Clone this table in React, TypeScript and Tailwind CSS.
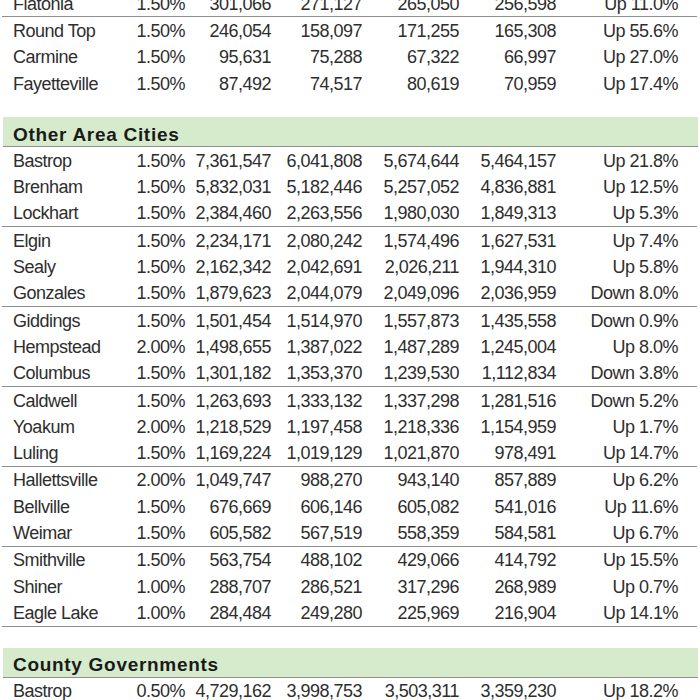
import React from "react";

type Row = [string, string, string, string, string, string, string];

const top: Row[] = [
  ["Flatonia", "1.50%", "301,066", "271,127", "265,050", "256,598", "Up 11.0%"],
  ["Round Top", "1.50%", "246,054", "158,097", "171,255", "165,308", "Up 55.6%"],
  ["Carmine", "1.50%", "95,631", "75,288", "67,322", "66,997", "Up 27.0%"],
  ["Fayetteville", "1.50%", "87,492", "74,517", "80,619", "70,959", "Up 17.4%"],
];

const other: Row[] = [
  ["Bastrop", "1.50%", "7,361,547", "6,041,808", "5,674,644", "5,464,157", "Up 21.8%"],
  ["Brenham", "1.50%", "5,832,031", "5,182,446", "5,257,052", "4,836,881", "Up 12.5%"],
  ["Lockhart", "1.50%", "2,384,460", "2,263,556", "1,980,030", "1,849,313", "Up 5.3%"],
  ["Elgin", "1.50%", "2,234,171", "2,080,242", "1,574,496", "1,627,531", "Up 7.4%"],
  ["Sealy", "1.50%", "2,162,342", "2,042,691", "2,026,211", "1,944,310", "Up 5.8%"],
  ["Gonzales", "1.50%", "1,879,623", "2,044,079", "2,049,096", "2,036,959", "Down 8.0%"],
  ["Giddings", "1.50%", "1,501,454", "1,514,970", "1,557,873", "1,435,558", "Down 0.9%"],
  ["Hempstead", "2.00%", "1,498,655", "1,387,022", "1,487,289", "1,245,004", "Up 8.0%"],
  ["Columbus", "1.50%", "1,301,182", "1,353,370", "1,239,530", "1,112,834", "Down 3.8%"],
  ["Caldwell", "1.50%", "1,263,693", "1,333,132", "1,337,298", "1,281,516", "Down 5.2%"],
  ["Yoakum", "2.00%", "1,218,529", "1,197,458", "1,218,336", "1,154,959", "Up 1.7%"],
  ["Luling", "1.50%", "1,169,224", "1,019,129", "1,021,870", "978,491", "Up 14.7%"],
  ["Hallettsville", "2.00%", "1,049,747", "988,270", "943,140", "857,889", "Up 6.2%"],
  ["Bellville", "1.50%", "676,669", "606,146", "605,082", "541,016", "Up 11.6%"],
  ["Weimar", "1.50%", "605,582", "567,519", "558,359", "584,581", "Up 6.7%"],
  ["Smithville", "1.50%", "563,754", "488,102", "429,066", "414,792", "Up 15.5%"],
  ["Shiner", "1.00%", "288,707", "286,521", "317,296", "268,989", "Up 0.7%"],
  ["Eagle Lake", "1.00%", "284,484", "249,280", "225,969", "216,904", "Up 14.1%"],
];

const county: Row[] = [
  ["Bastrop", "0.50%", "4,729,162", "3,998,753", "3,503,311", "3,359,230", "Up 18.2%"],
];

function DataRow({ r }: { r: Row }) {
  return (
    <div className="grid grid-cols-[128px_55px_86px_91px_97px_97px_122px] h-[26.3px] items-center leading-none pt-[1px]">
      <div className="pl-[11px] whitespace-nowrap">{r[0]}</div>
      <div className="text-right">{r[1]}</div>
      <div className="text-right">{r[2]}</div>
      <div className="text-right">{r[3]}</div>
      <div className="text-right">{r[4]}</div>
      <div className="text-right">{r[5]}</div>
      <div className="text-right whitespace-nowrap">{r[6]}</div>
    </div>
  );
}

function Group({ rows, line = true }: { rows: Row[]; line?: boolean }) {
  return (
    <div className={line ? "border-b border-[#8f8f8f]" : ""}>
      {rows.map((r) => (
        <DataRow key={r[0] + r[2]} r={r} />
      ))}
    </div>
  );
}

function Header({ title }: { title: string }) {
  return (
    <div className="ml-[1px] w-[695px] h-[30px] bg-[#d5ebcb] border-b border-[#8f8f8f] flex items-center pl-[10px] pt-[5px]">
      <span className="font-bold text-[19px] tracking-[0.7px] text-[#1a1a1a] leading-none">{title}</span>
    </div>
  );
}

export default function App() {
  const groups: Row[][] = [];
  for (let i = 0; i < other.length; i += 3) groups.push(other.slice(i, i + 3));
  return (
    <div
      className="bg-white w-[700px] h-[700px] overflow-hidden text-[18px] tracking-[-0.5px] text-[#2e2e2e]"
      style={{ fontFamily: '"Liberation Sans", Arial, sans-serif' }}
    >
      <div className="ml-[2px] w-[695px] -mt-[10px]">
        <Group rows={top.slice(0, 1)} />
        <Group rows={top.slice(1)} line={false} />
        <div className="h-[21px]" />
        <Header title="Other Area Cities" />
        {groups.map((g, i) => (
          <Group key={i} rows={g} />
        ))}
        <div className="h-[21px]" />
        <Header title="County Governments" />
        <Group rows={county} line={false} />
      </div>
    </div>
  );
}
